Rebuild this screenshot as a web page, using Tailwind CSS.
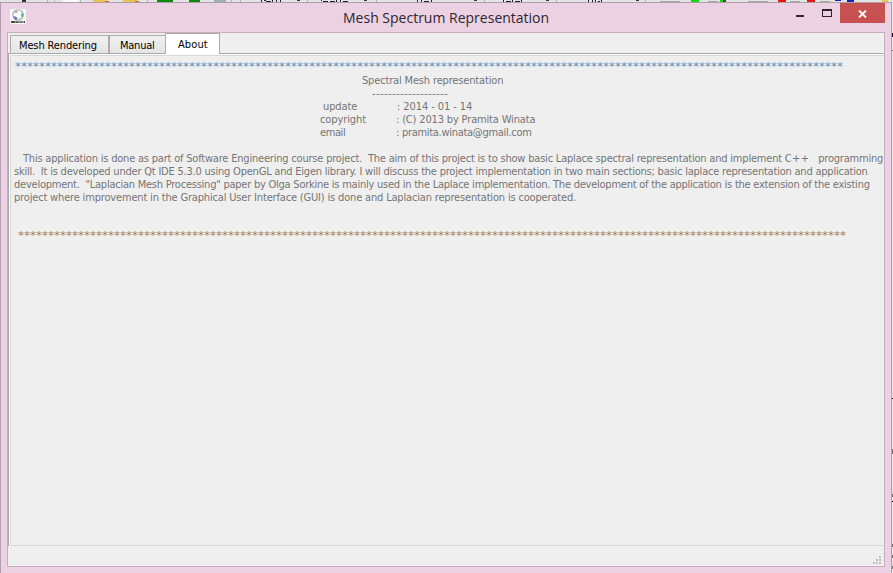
<!DOCTYPE html>
<html lang="en"><head><meta charset="utf-8"><title>Mesh Spectrum Representation</title>
<script src="https://cdn.jsdelivr.net/npm/@tailwindcss/browser@4"></script></head>
<body class="w-[893px] h-[573px] overflow-hidden bg-[#ececec] font-['DejaVu_Sans_Condensed','DejaVu_Sans',sans-serif] text-[11px] relative">
<!-- strip of the application behind the window -->
<svg class="absolute left-0 top-0" width="893" height="573" shape-rendering="crispEdges">
  <path d="M0 0H893V2H0z" fill="#e4e4e4"/>
  <path d="M47 0h1v2h-1zM54 0h1v2h-1zM80 0h1v2h-1zM147 0h1v2h-1zM231 0h1v2h-1zM240 0h1v2h-1zM307 0h1v2h-1zM376 0h1v2h-1zM484 0h1v2h-1zM556 0h1v2h-1zM645 0h1v2h-1z" fill="#b5b5b5"/>
  <path d="M63 0h16v2H63z" fill="#fafafa"/>
  <path d="M22 0h4v2h-4zM297 0h3v1h-3zM364 0h3v1h-3zM474 0h3v1h-3zM546 0h3v1h-3zM636 0h3v1h-3z" fill="#333"/>
  <path d="M93 0h14v2H93zM123 0h14v2h-14zM882 0h6v2h-6z" fill="#ecc64c"/>
  <path d="M105 1h4v1h-4zM135 1h4v1h-4z" fill="#b56a4a"/>
  <path d="M157 0h16v2h-16zM189 0h11v2h-11z" fill="#088a08"/>
  <path d="M214 0h12v2h-12z" fill="#9fb0bd"/>
  <path d="M660 1h20v1h-20zM708 1h10v1h-10zM748 1h20v1h-20zM790 1h10v1h-10zM820 1h10v1h-10z" fill="#aaa"/>
  <path d="M691 0h8v2h-8zM720 0h4v2h-4z" fill="#0bdc0b"/>
  <path d="M723 0h3v2h-3z" fill="#444"/>
  <path d="M778 0h8v2h-8zM807 0h8v2h-8z" fill="#ea1111"/>
  <path d="M835 0h6v1h-6zM847 0h7v2h-7z" fill="#2020b8"/>
  <g fill="#20202c"><path d="M261 0h1v2h-1zM264 0h2v1h-2zM266 1h5v1h-5zM272 0h1v2h-1zM276 0h1v2h-1zM280 0h1v2h-1z"/>
  <path d="M321 0h1v1h-1zM323 1h5v1h-5zM330 1h5v1h-5zM336 0h1v2h-1zM340 0h1v2h-1zM343 1h5v1h-5z"/>
  <path d="M417 0h1v2h-1zM421 0h1v2h-1zM424 1h5v1h-5zM431 0h1v2h-1z"/>
  <path d="M503 0h1v2h-1zM506 1h5v1h-5zM512 0h1v2h-1zM515 1h5v1h-5zM521 0h1v2h-1z"/>
  <path d="M588 0h1v2h-1zM592 0h1v2h-1zM595 0h1v2h-1zM598 1h2v1h-2zM601 0h1v2h-1z"/></g>
  <path d="M892 33h1v4h-1z" fill="#1c1030"/><path d="M892 50h1v1h-1zM892 449h1v5h-1zM892 494h1v3h-1zM892 544h1v3h-1zM892 555h1v3h-1zM892 566h1v3h-1z" fill="#777"/>
  <path d="M892 398h1v1h-1zM892 501h1v1h-1z" fill="#000"/>
</svg>
<div class="relative mt-[2px] w-[892px] h-[571px] border-t border-l border-r border-[#b09eac] bg-[#ecd1e2] flex flex-col">
  <header class="h-[29px] flex shrink-0 relative">
    <svg class="ml-[9px] mt-[6px]" width="16" height="15" viewBox="0 0 16 15">
      <path d="M0 0h16v15H0z" fill="#f8f8f8"/>
      <circle cx="8" cy="6" r="5.2" fill="#fff" stroke="#aeb3b1" stroke-width="1.3"/>
      <path d="M4.500 3l2-1.500 1.500.8-1 1.500-1.500.4z" fill="#a5aeab"/>
      <path d="M11 4.500l2.500-.3.2 3-1.700 1.300-1-1.500z" fill="#5fbf86"/>
      <path d="M3.500 7l3 1 1.200 2.600-2.700.2z" fill="#5a70bd"/>
      <path d="M8.500 8.800l2-.2-.3 1.800z" fill="#d9a0b4"/>
      <path d="M1 12h14v2H1z" fill="#9c9c9c"/>
      <path d="M1 12h4v2H1zM6 12.500h1.500v1.500H6zM8.500 12.500h1v1.500H8.500zM11 12.500h1v1.500h-1zM14 12h1v2h-1z" fill="#484848"/>
    </svg>
    <h1 class="absolute left-[342px] top-[5px] text-[14px] leading-[20px] whitespace-nowrap text-[#2d2730] font-['Open_Sans',sans-serif]">Mesh Spectrum Representation</h1>
    <div class="ml-auto mr-[6px] flex h-[20px]">
      <svg width="45" height="20" shape-rendering="crispEdges"><path d="M1 12h8v2H1z" fill="#2a2528"/><path d="M27 6h10v8H27zM28 8h8v5H28z" fill="#2a2528" fill-rule="evenodd"/></svg>
      <div class="w-[45px] h-[20px] bg-[#c75050] flex items-center justify-center">
        <svg class="mt-[1px]" width="9" height="8" viewBox="0 0 9 8"><path d="M1 .5l7 7M8 .5l-7 7" stroke="#fff" stroke-width="1.900"/></svg>
      </div>
    </div>
  </header>
  <main class="ml-[6px] w-[878px] h-[535px] shrink-0 border border-[#c8adc0] bg-[#efefef] relative">
    <nav class="h-[20px] flex items-end pl-[2px] text-black tracking-[-0.13px] whitespace-nowrap">
      <div class="w-[99px] h-[18px] border border-b-0 border-[#acacac] bg-linear-to-b from-[#f0f0f0] to-[#e5e5e5] pl-[8px] leading-[19px]">Mesh Rendering</div>
      <div class="w-[57px] h-[18px] border border-b-0 border-[#acacac] bg-linear-to-b from-[#f0f0f0] to-[#e5e5e5] pl-[10px] leading-[19px] tracking-[-0.25px]">Manual</div>
      <div class="w-[55px] h-[21px] -mb-px -ml-px border border-b-0 border-[#acacac] bg-white pl-[12px] leading-[21px] z-10 tracking-[0.1px]">About</div>
    </nav>
    <div class="h-[493px] border-t border-l border-[#a5a9a9] bg-white pt-px pl-px">
      <section class="h-[491px] border border-r-0 border-[#d6d6d6] bg-[#efefef] text-[#757575] whitespace-pre leading-[13px] pt-[5px] pl-[3px] tracking-[-0.213px] flex flex-col">
        <p id="top-rule" class="h-[13px] pl-px text-[#6f8499] tracking-[0px] font-['DejaVu_Sans',sans-serif] text-[12px] leading-[12px] origin-[0_5px] scale-y-[0.85]"></p>
        <p class="h-[13px] pl-[348px] tracking-[-0.16px]">Spectral Mesh representation</p>
        <p class="h-[13px] pl-[358px] tracking-[0.43px]">-------------------</p>
        <div class="h-[13px] flex pl-[309px]"><span class="w-[74px] tracking-[-0.1px]">update</span><span class="tracking-[-0.08px]">: 2014 - 01 - 14</span></div>
        <div class="h-[13px] flex pl-[306px]"><span class="w-[76px] tracking-[-0.1px]">copyright</span><span class="tracking-[-0.16px]">: (C) 2013 by Pramita Winata</span></div>
        <div class="h-[13px] flex pl-[306px]"><span class="w-[76px] tracking-[-0.4px]">email</span><span class="tracking-[-0.29px]">: pramita.winata@gmail.com</span></div>
        <p class="h-[13px] mt-[13px] pl-[9px] tracking-[-0.2px]">This application is done as part of Software Engineering course project.  The aim of this project is to show basic Laplace spectral representation and implement <span class="tracking-[0.3px]">C++</span><span class="tracking-[-0.9px]">    </span>programming</p>
        <p class="h-[13px]">skill.  It is developed under Qt IDE 5.3.0 using OpenGL and Eigen library. I will discuss the project implementation in two main sections; basic laplace representation and application</p>
        <p class="h-[13px] tracking-[-0.236px]">development.  "Laplacian Mesh Processing" paper by Olga Sorkine is mainly used in the Laplace implementation. The development of the application is the extension of the existing</p>
        <p class="h-[13px] tracking-[-0.17px]">project where improvement in the Graphical User Interface (GUI) is done and Laplacian representation is cooperated.</p>
        <p id="bottom-rule" class="h-[13px] mt-[26px] pl-[4px] text-[#937c6c] tracking-[0px] font-['DejaVu_Sans',sans-serif] text-[12px] leading-[12px] origin-[0_5px] scale-y-[0.85]"></p>
      </section>
    </div>
    <svg class="absolute right-[3px] bottom-[2px]" width="8" height="8" shape-rendering="crispEdges"><path d="M6 0h2v2H6zM3 3h2v2H3zM6 3h2v2H6zM0 6h2v2H0zM3 6h2v2H3zM6 6h2v2H6z" fill="#bdbdbd"/></svg>
  </main>
</div>
<script>
for (const id of ['top-rule', 'bottom-rule']) document.getElementById(id).textContent = '*'.repeat(138);
</script>
</body></html>
